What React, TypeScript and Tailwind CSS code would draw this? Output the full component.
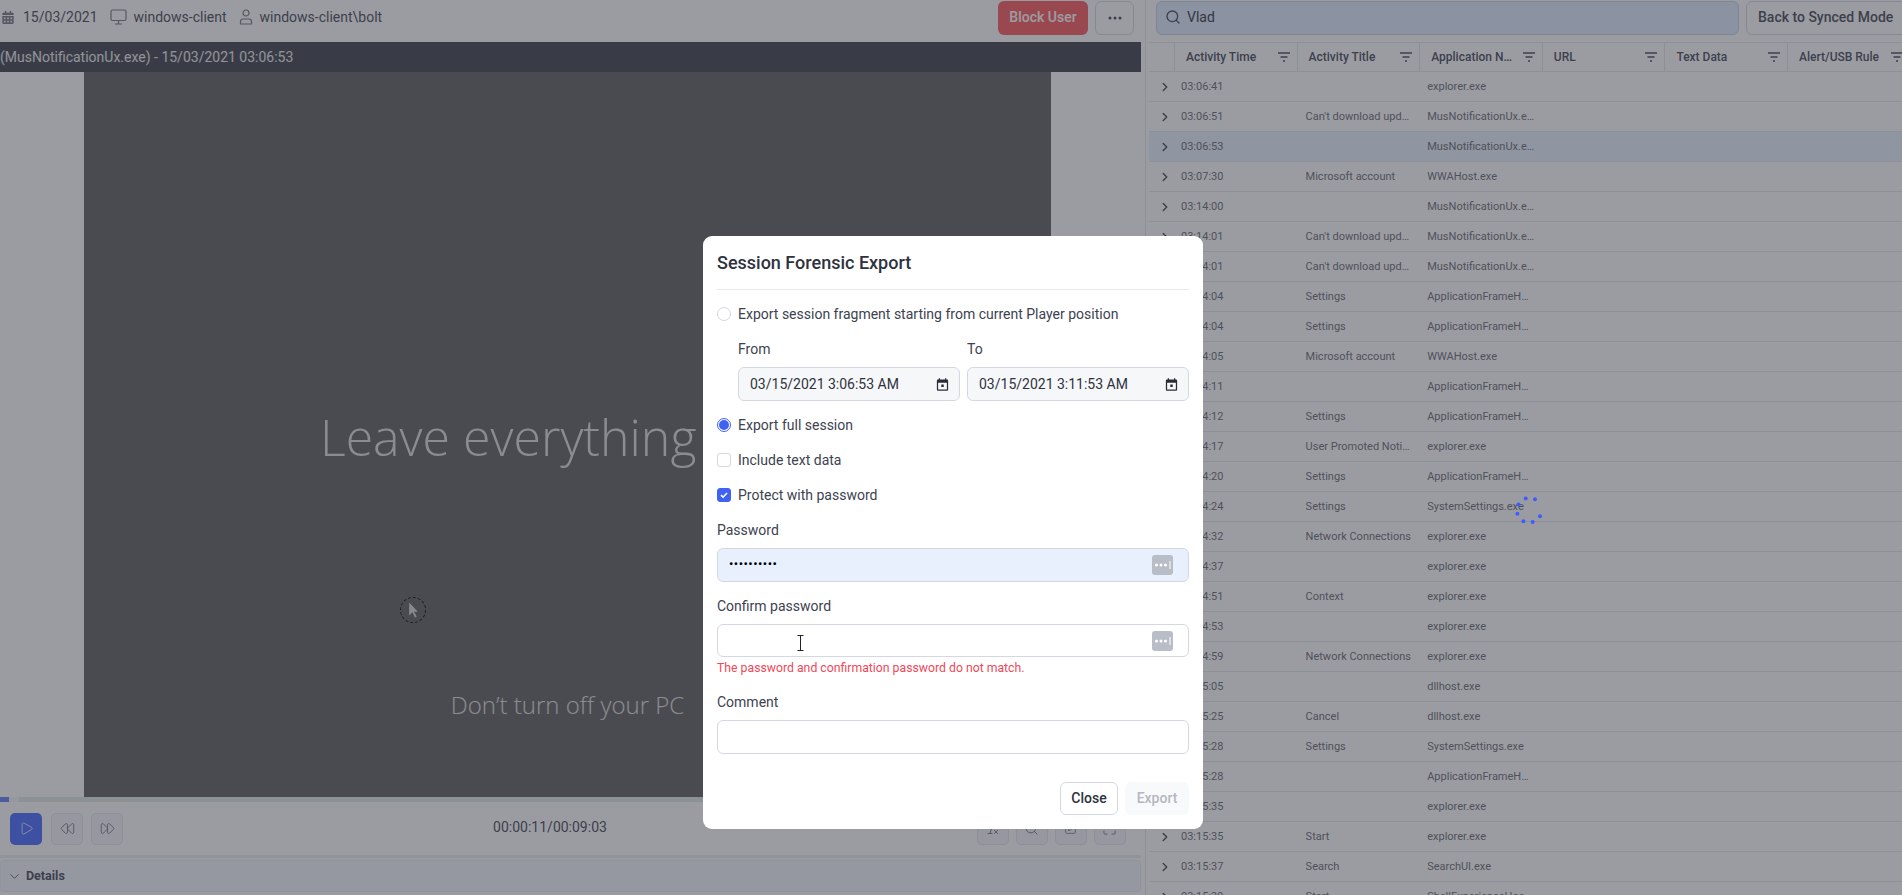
import { ChevronRight, ChevronDown, Search, Play, Rewind, FastForward, RemoveFormatting, SquarePen, Maximize } from "lucide-react";
import { FaCalendarAlt } from "react-icons/fa";

const ME = "MusNotificationUx.e…";
const AF = "ApplicationFrameH…";
const rows: [string, string, string][] = [
  ["03:06:41", "", "explorer.exe"],
  ["03:06:51", "Can't download upd…", ME],
  ["03:06:53", "", ME],
  ["03:07:30", "Microsoft account", "WWAHost.exe"],
  ["03:14:00", "", ME],
  ["03:14:01", "Can't download upd…", ME],
  ["03:14:01", "Can't download upd…", ME],
  ["03:14:04", "Settings", AF],
  ["03:14:04", "Settings", AF],
  ["03:14:05", "Microsoft account", "WWAHost.exe"],
  ["03:14:11", "", AF],
  ["03:14:12", "Settings", AF],
  ["03:14:17", "User Promoted Noti…", "explorer.exe"],
  ["03:14:20", "Settings", AF],
  ["03:14:24", "Settings", "SystemSettings.exe"],
  ["03:14:32", "Network Connections", "explorer.exe"],
  ["03:14:37", "", "explorer.exe"],
  ["03:14:51", "Context", "explorer.exe"],
  ["03:14:53", "", "explorer.exe"],
  ["03:14:59", "Network Connections", "explorer.exe"],
  ["03:15:05", "", "dllhost.exe"],
  ["03:15:25", "Cancel", "dllhost.exe"],
  ["03:15:28", "Settings", "SystemSettings.exe"],
  ["03:15:28", "", AF],
  ["03:15:35", "", "explorer.exe"],
  ["03:15:35", "Start", "explorer.exe"],
  ["03:15:37", "Search", "SearchUI.exe"],
  ["03:15:39", "Start", "ShellExperienceHos"],
];
const heads = ["Activity Time", "Activity Title", "Application N…", "URL", "Text Data", "Alert/USB Rule"];

function FilterIcon() {
  return (
    <svg width="12" height="11" viewBox="0 0 12 11" className="absolute right-[7px] top-[9px] text-[#424652]">
      <path d="M0 1h12M2.5 5h7M5 9h2" stroke="currentColor" strokeWidth="1.5" fill="none" />
    </svg>
  );
}

function Ellipsis() {
  return (
    <svg width="14" height="4" viewBox="0 0 14 4">
      <circle cx="2" cy="2" r="1.5" fill="#424652" />
      <circle cx="7" cy="2" r="1.5" fill="#424652" />
      <circle cx="12" cy="2" r="1.5" fill="#424652" />
    </svg>
  );
}

function DateIcon() {
  return (
    <svg width="15" height="15" viewBox="0 0 24 24" fill="#2a2d36">
      <path d="M19 4h-1V2h-2v2H8V2H6v2H5C3.9 4 3 4.9 3 6v14c0 1.1.9 2 2 2h14c1.1 0 2-.9 2-2V6c0-1.1-.9-2-2-2zm0 16H5V9h14v11zM10 12h4v4h-4z" />
    </svg>
  );
}

function KeyBadge() {
  return (
    <svg width="21" height="20" viewBox="0 0 21 20" className="shrink-0">
      <rect width="21" height="20" rx="3" fill="#b9bdc8" />
      <circle cx="4.5" cy="10" r="1.5" fill="#fff" />
      <circle cx="9" cy="10" r="1.5" fill="#fff" />
      <circle cx="13.5" cy="10" r="1.5" fill="#fff" />
      <rect x="17.5" y="6" width="1" height="8" fill="#fff" />
    </svg>
  );
}

function Radio({ on }: { on?: boolean }) {
  return (
    <span className={"w-[14px] h-[14px] rounded-full border flex items-center justify-center shrink-0 bg-white " + (on ? "border-[#3f62f5]" : "border-[#d5d8e0]")}>
      {on && <span className="w-[10px] h-[10px] rounded-full bg-[#3f62f5]" />}
    </span>
  );
}

function Check({ on }: { on?: boolean }) {
  return (
    <span className={"w-[14px] h-[14px] rounded-[3px] border flex items-center justify-center shrink-0 " + (on ? "border-[#3f62f5] bg-[#3f62f5]" : "border-[#d5d8e0] bg-white")}>
      {on && (
        <svg width="10" height="10" viewBox="0 0 10 10">
          <path d="M2 5.2l2.1 2L8 3" stroke="#fff" strokeWidth="1.6" fill="none" />
        </svg>
      )}
    </span>
  );
}

function SmallBtn({ children, cls }: { children: React.ReactNode; cls?: string }) {
  return (
    <div className={"h-8 rounded-[5px] flex items-center justify-center border border-[#e4e6ea] bg-[#f4f5f8] text-[#6f7480] " + (cls ?? "w-8")}>
      {children}
    </div>
  );
}

export default function App() {
  return (
    <div className="relative h-[895px] w-[1902px] overflow-hidden bg-white flex text-[14px] text-[#3d4250] font-['Roboto',sans-serif]">
      {/* left panel */}
      <div className="w-[1141px] shrink-0 flex flex-col">
        <div className="h-[42px] shrink-0 flex justify-between pt-px pl-[2px] pr-[7px]">
          <div className="flex items-center h-[34px] pb-[2px] text-[#424652]">
            <FaCalendarAlt className="w-[12px] h-[13px] text-[#72747e]" />
            <span className="ml-[9px]">15/03/2021</span>
            <svg width="17" height="16" viewBox="0 0 17 16" className="ml-[12px]" fill="none" stroke="#72747e" strokeWidth="1.2">
              <rect x="1" y="1" width="15" height="10.5" rx="1.5" />
              <path d="M8.5 12v2.5M5 15h7" />
            </svg>
            <span className="ml-[7px]">windows-client</span>
            <svg width="14" height="16" viewBox="0 0 14 16" className="ml-[12px]" fill="none" stroke="#72747e" strokeWidth="1.2">
              <circle cx="7" cy="4" r="3" />
              <path d="M1.5 15v-2.5a2.5 2.5 0 0 1 2.5-2.5h6a2.5 2.5 0 0 1 2.5 2.5V15z" />
            </svg>
            <span className="ml-[7px]">windows-client\bolt</span>
          </div>
          <div className="flex gap-[7px] items-start">
            <div className="w-[90px] h-[34px] pb-[2px] rounded-[6px] bg-[#fc565a] text-white font-medium flex items-center justify-center">Block User</div>
            <div className="w-[39px] h-[34px] rounded-[6px] border border-[#d5d8e0] flex items-center justify-center">
              <Ellipsis />
            </div>
          </div>
        </div>
        <div className="h-[30px] shrink-0 bg-[#3a3e46] text-white/90 flex items-center whitespace-nowrap">(MusNotificationUx.exe) - 15/03/2021 03:06:53</div>
        <div className="h-[725px] shrink-0 flex justify-center pr-[6px]">
          <div className="relative w-[967px] bg-[#5c5c5a] flex flex-col items-center overflow-hidden font-['Open_Sans',sans-serif] font-light text-white/80">
            <div className="w-[495px] mt-[329px] text-[50px] leading-[72px] whitespace-nowrap">Leave everything</div>
            <div className="mt-[214px] text-[24px] leading-[36px] whitespace-nowrap">Don’t turn off your PC</div>
            <div className="absolute left-[316px] top-[525px] w-[26px] h-[26px] rounded-full border border-dashed border-black flex items-center justify-center">
              <svg width="13" height="18" viewBox="0 0 12 16">
                <path d="M2 1v12l3-3 2.5 5 1.5-1-2.5-4.5H10z" fill="#d8d8d8" />
              </svg>
            </div>
          </div>
        </div>
        <div className="h-[5px] shrink-0 bg-[#e0e8e2] flex">
          <div className="w-[9px] bg-[#5f7ff5]" />
          <div className="w-[10px] bg-[#f4f6f6]" />
        </div>
        <div className="h-[53px] shrink-0 flex justify-between items-center pl-[10px] pr-[15px] border-b-[3px] border-[#eceef0] box-content">
          <div className="flex gap-[8px]">
            <div className="w-[32px] h-8 rounded-[5px] bg-[#4466ff] flex items-center justify-center mr-px">
              <Play className="w-[15px] h-[15px] text-white/80" strokeWidth={1.5} />
            </div>
            <SmallBtn><Rewind className="w-[15px] h-[15px]" strokeWidth={1.5} /></SmallBtn>
            <SmallBtn><FastForward className="w-[15px] h-[15px]" strokeWidth={1.5} /></SmallBtn>
          </div>
          <div className="text-[#424652] leading-[30px] pb-[3px]">00:00:11/00:09:03</div>
          <div className="flex gap-[7px]">
            <SmallBtn><RemoveFormatting className="w-[15px] h-[15px]" strokeWidth={1.5} /></SmallBtn>
            <SmallBtn><Search className="w-[15px] h-[15px]" strokeWidth={1.5} /></SmallBtn>
            <SmallBtn><SquarePen className="w-[13px] h-[13px]" strokeWidth={1.5} /></SmallBtn>
            <SmallBtn><Maximize className="w-[15px] h-[15px]" strokeWidth={1.5} /></SmallBtn>
          </div>
        </div>
        <div className="mt-[2px] h-[32px] shrink-0 rounded-[4px] bg-[#f2f6fc] border border-[#eaecf0] flex items-center pl-[6px] text-[12.5px] font-bold text-[#424652]">
          <ChevronDown className="w-[15px] h-[15px] text-[#5a5e6a]" strokeWidth={1.5} />
          <span className="ml-[4px]">Details</span>
        </div>
      </div>

      {/* splitter */}
      <div className="ml-[4px] w-px bg-[#e2e4e8] shrink-0" />

      {/* right panel */}
      <div className="flex-1 min-w-0 pl-[3px] flex flex-col overflow-hidden">
        <div className="h-[42px] shrink-0 flex items-start gap-[7px] pt-px pl-[7px]">
          <div className="w-[583px] h-[34px] pb-[2px] shrink-0 rounded-[6px] bg-[#deeaff] border border-[#c8d0e0] flex items-center pl-[8px] text-[#2f323c]">
            <Search className="w-[16px] h-[16px] text-[#424652]" strokeWidth={2} />
            <span className="ml-[6px]">Vlad</span>
          </div>
          <div className="h-[34px] pb-[2px] w-[170px] shrink-0 rounded-[6px] border border-[#d5d8e0] flex items-center pl-[11px] font-medium text-[#424652] whitespace-nowrap">Back to Synced Mode</div>
        </div>
        <div className="h-[30px] shrink-0 flex border-t border-b border-[#e4e6e8] text-[12px] font-medium text-[#424652] w-[780px]">
          <div className="w-[26px] shrink-0 border-r border-[#e4e6e8]" />
          {heads.map((h) => (
            <div key={h} className="relative w-[122.6px] shrink-0 border-r border-[#e4e6e8] pl-[11px] flex items-center whitespace-nowrap">
              {h}
              <FilterIcon />
            </div>
          ))}
        </div>
        {rows.map(([t, a, b], i) => (
          <div key={i} className={"h-[30px] shrink-0 flex items-center border-b border-[#e4e6e8] text-[11px] text-[#66686f] w-[780px] " + (i === 2 ? "bg-[#e6f0fc]" : "")}>
            <div className="w-[26px] shrink-0 pl-[9px]">
              <ChevronRight className="w-[14px] h-[14px] text-[#424652]" strokeWidth={2.5} />
            </div>
            <div className="w-[122.6px] shrink-0 pl-[6px] pt-px">{t}</div>
            <div className="w-[122.6px] shrink-0 pl-[8px] pt-px whitespace-nowrap">{a}</div>
            <div className="w-[122.6px] shrink-0 pl-[7px] pt-px whitespace-nowrap">{b}</div>
          </div>
        ))}
      </div>

      {/* modal overlay */}
      <div className="absolute inset-0 bg-[#383a46]/50" />

      {/* spinner */}
      <svg width="30" height="30" viewBox="0 0 30 30" className="absolute left-[1514px] top-[494px]" fill="#3f5cff">
        <circle cx="4.5" cy="10.5" r="2" />
        <circle cx="11.7" cy="4.5" r="2" />
        <circle cx="21" cy="5.2" r="2" />
        <circle cx="26" cy="22.2" r="2" />
        <circle cx="18.7" cy="28" r="2" />
        <circle cx="9.4" cy="27.2" r="2" />
        <circle cx="3.4" cy="19.8" r="2" />
      </svg>

      {/* dialog */}
      <div className="absolute left-[703px] top-[236px] w-[500px] bg-white rounded-[9px] px-[14px] pb-[14px] text-[#3d4250]">
        <div className="h-[54px] border-b border-[#e6e8ec] flex items-center text-[18px] font-medium text-[#2e3240]">Session Forensic Export</div>
        <div className="mt-[14px] h-5 flex items-center gap-[7px]">
          <Radio />
          <span>Export session fragment starting from current Player position</span>
        </div>
        <div className="mt-[15px] ml-[21px] flex gap-[7px]">
          {[["From", "03/15/2021 3:06:53 AM"], ["To", "03/15/2021 3:11:53 AM"]].map(([l, v]) => (
            <div key={l} className="w-[222px]">
              <div className="h-5 leading-5">{l}</div>
              <div className="mt-[8px] h-[34px] rounded-[6px] bg-[#f6f7f9] border border-[#d5d8e0] flex items-center justify-between pl-[11px] pr-[9px] text-[#2e3240]">
                <span>{v}</span>
                <DateIcon />
              </div>
            </div>
          ))}
        </div>
        <div className="mt-[14px] h-5 flex items-center gap-[7px]">
          <Radio on />
          <span>Export full session</span>
        </div>
        <div className="mt-[15px] h-5 flex items-center gap-[7px]">
          <Check />
          <span>Include text data</span>
        </div>
        <div className="mt-[15px] h-5 flex items-center gap-[7px]">
          <Check on />
          <span>Protect with password</span>
        </div>
        <div className="mt-[15px] h-5 leading-5">Password</div>
        <div className="mt-[8px] h-[34px] rounded-[6px] bg-[#e8f0fe] border border-[#d5d8e0] flex items-center justify-between pl-[11px] pr-[15px]">
          <span className="text-[13px] text-black tracking-[0.45px] -mt-[3px]">••••••••••</span>
          <KeyBadge />
        </div>
        <div className="mt-[14px] h-5 leading-5">Confirm password</div>
        <div className="relative mt-[8px] h-[33px] rounded-[6px] bg-white border border-[#d5d8e0] flex items-center justify-end pr-[15px]">
          <KeyBadge />
          <svg width="7" height="16" viewBox="0 0 7 16" className="absolute left-[79px] top-[10px]" fill="none" stroke="#222" strokeWidth="1">
            <path d="M0.5 .5h6M3.5 .5v15M.5 15.5h6" />
          </svg>
        </div>
        <div className="mt-[3px] h-4 leading-4 text-[12.25px] text-[#f0485a] whitespace-nowrap">The password and confirmation password do not match.</div>
        <div className="mt-[16px] h-5 leading-5">Comment</div>
        <div className="mt-[8px] h-[34px] rounded-[6px] bg-white border border-[#d5d8e0]" />
        <div className="mt-[28px] flex justify-end gap-[7px]">
          <div className="w-[58px] h-[33px] rounded-[6px] border border-[#d5d8e0] flex items-center justify-center font-medium text-[#2e3240]">Close</div>
          <div className="w-[64px] h-[33px] rounded-[6px] bg-[#f8f9fb] flex items-center justify-center font-medium text-[#b4b7c0]">Export</div>
        </div>
      </div>
    </div>
  );
}
